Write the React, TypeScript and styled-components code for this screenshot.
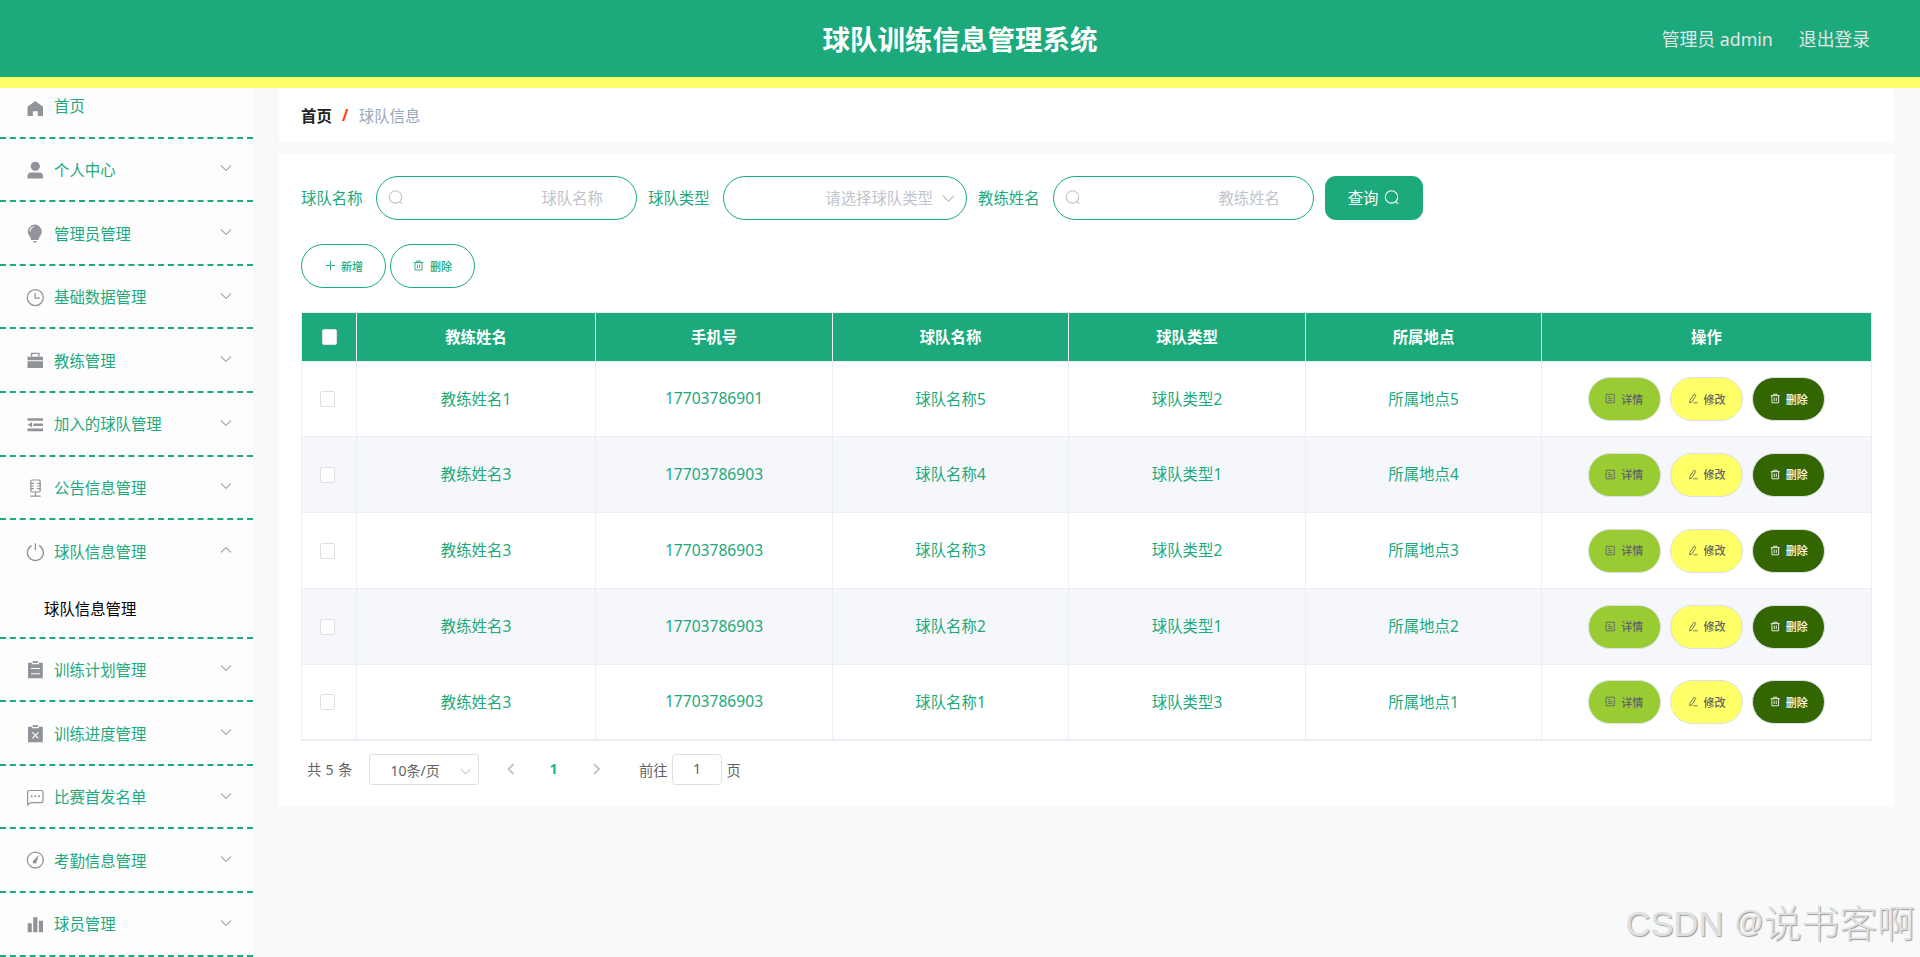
import React from 'react';
import styled, { createGlobalStyle, css } from 'styled-components';

const green = '#1ca97c';
const line = '#ebeef5';

const GlobalStyle = createGlobalStyle`
  * { box-sizing: border-box; }
  body {
    margin: 0;
    background: #f7f9fb;
    font-family: 'Noto Sans', 'Noto Sans CJK SC', sans-serif;
    font-size: 15.4px;
    color: #606266;
    overflow: hidden;
  }
  button, input { font-family: inherit; margin: 0; }
`;

const Page = styled.div`
  height: 957px;
  display: flex;
  flex-direction: column;
  overflow: hidden;
`;

const Header = styled.header`
  flex: none;
  height: 88px;
  display: grid;
  grid-template-columns: 1fr auto 1fr;
  align-items: center;
  padding: 0 50px 0 50px;
  background: ${green};
  border-bottom: 11px solid #ffff66;
`;

const Title = styled.h1`
  grid-column: 2;
  margin: 0;
  padding-top: 2px;
  font-size: 27.5px;
  line-height: 40px;
  font-weight: 700;
  color: #fff;
`;

const UserNav = styled.div`
  display: flex;
  justify-content: flex-end;
  gap: 26px;
  font-size: 17.8px;
  line-height: 26px;
  color: #e6e6e6;
`;

const Body = styled.div`
  flex: 1;
  min-height: 0;
  display: flex;
`;

const Sidebar = styled.nav`
  flex: none;
  width: 253px;
  background: #fdfdfd;
  overflow: hidden;
`;

const Menu = styled.ul`
  list-style: none;
  margin: -13px 0 0;
  padding: 0;
`;

const MenuItem = styled.li`
  border-bottom: 2px dashed ${green};
`;

const MenuRow = styled.div`
  height: 61.6px;
  padding: 2px 19px 0 26px;
  display: flex;
  align-items: center;
  color: ${green};
  svg { flex: none; overflow: visible; }
`;

const MenuLabel = styled.span`
  flex: 1;
  margin-left: 10px;
  padding-top: 1.4px;
  line-height: 22px;
`;

const MenuArrow = styled.svg`
  margin-top: -4px;
`;

const SubItem = styled.div`
  height: 54.8px;
  padding: 2px 0 4px 44px;
  display: flex;
  align-items: center;
  color: #000;
`;

const Main = styled.main`
  flex: 1;
  min-width: 0;
  padding: 0 26px;
`;

const Crumbs = styled.div`
  height: 55px;
  margin-bottom: 11px;
  padding: 0 22px 1px;
  display: flex;
  align-items: center;
  background: #fff;
  border-radius: 4px;
  color: #97a8be;
`;

const CrumbHome = styled.span`
  color: #222;
  font-weight: 600;
`;

const CrumbSlash = styled.span`
  width: 27px;
  text-align: center;
  font-weight: 700;
  color: #ff3a0c;
`;

const Card = styled.section`
  height: 653px;
  padding: 22px;
  background: #fff;
`;

const Form = styled.div`
  display: flex;
  align-items: center;
  height: 44px;
`;

const FieldLabel = styled.label<{ $gap?: number }>`
  margin-left: ${p => p.$gap ?? 0}px;
  width: 64px;
  padding-bottom: 1px;
  color: ${green};
`;

const Field = styled.div<{ $width: number; $ml: number; $pr: number }>`
  width: ${p => p.$width}px;
  height: 44px;
  margin-left: ${p => p.$ml}px;
  padding: 0 ${p => p.$pr}px 0 11px;
  display: flex;
  align-items: center;
  gap: 8px;
  border: 1px solid ${green};
  border-radius: 22px;
  color: #c0c4cc;
`;

const Placeholder = styled.span`
  margin-left: auto;
  padding-bottom: 1px;
`;

const SearchButton = styled.button`
  width: 98px;
  height: 44px;
  margin-left: 11px;
  padding: 0 1px 1px 0;
  display: flex;
  align-items: center;
  justify-content: center;
  gap: 5.5px;
  border: 0;
  border-radius: 11px;
  background: ${green};
  color: #fff;
  font-size: 15.4px;
`;

const Tools = styled.div`
  display: flex;
  gap: 3.8px;
  margin: 24px 0;
`;

const pill = css`
  height: 44px;
  display: flex;
  align-items: center;
  gap: 5.5px;
  border-radius: 22px;
  font-size: 11px;
  font-weight: 500;
  white-space: nowrap;
`;

const ToolButton = styled.button`
  ${pill}
  width: 85.2px;
  padding: 0 22px 1px 22.5px;
  border: 1px solid ${green};
  background: #fff;
  color: ${green};
`;

const ActionButton = styled.button<{ $bg: string; $fg: string }>`
  ${pill}
  width: 73px;
  padding: 0 16.5px 1px;
  border: 1px solid #dcdfe6;
  background: ${p => p.$bg};
  color: ${p => p.$fg};
`;

const Table = styled.div`
  width: 1571px;
  border: 1px solid ${line};
`;

const Row = styled.div<{ $height: number; $striped?: boolean; $head?: boolean }>`
  display: grid;
  grid-template-columns: 55px 239px 237px 236px 237px 236px 329px;
  height: ${p => p.$height}px;
  background: ${p => (p.$head ? green : p.$striped ? '#f5f7fa' : '#fff')};
  color: ${p => (p.$head ? '#fff' : green)};
  font-weight: ${p => (p.$head ? 700 : 400)};
`;

const Cell = styled.div`
  display: flex;
  align-items: center;
  justify-content: center;
  border-right: 1px solid ${line};
  border-bottom: 1px solid ${line};
  &:last-child { border-right: 0; }
`;

const TextCell = styled(Cell)`
  padding-bottom: 1.5px;
`;

const PhoneCell = styled(TextCell)`
  font-size: 15.6px;
`;

const CheckCell = styled(Cell)<{ $shift: number }>`
  justify-content: flex-start;
  padding-left: ${p => p.$shift}px;
`;

const CheckBox = styled.span`
  width: 15px;
  height: 16px;
  border: 1px solid #dcdfe6;
  border-radius: 2px;
  background: #fff;
`;

const Actions = styled(Cell)`
  gap: 9.2px;
`;

const Pager = styled.div`
  display: flex;
  align-items: center;
  height: 31px;
  margin-top: 13px;
  padding-left: 5px;
  font-size: 14.3px;
`;

const Total = styled.span`
  width: 63px;
  padding: 0 0 3px 1px;
  word-spacing: 0.6px;
`;

const SizeSelect = styled.div`
  width: 110px;
  height: 31px;
  padding: 0 6px 0 20.5px;
  display: flex;
  align-items: center;
  justify-content: space-between;
  border: 1px solid #dcdfe6;
  border-radius: 3px;
  font-size: 14px;
`;

const SelectArrow = styled.span`
  display: flex;
  padding-top: 3px;
`;

const PagerButton = styled.span<{ $width: number }>`
  width: ${p => p.$width}px;
  display: flex;
  justify-content: center;
  padding-bottom: 2px;
`;

const CurrentPage = styled(PagerButton)`
  color: #18b98a;
  font-weight: 700;
`;

const Jump = styled.span`
  display: flex;
  align-items: center;
  gap: 4.5px;
  margin-left: 11px;
`;

const JumpBox = styled.span`
  width: 50px;
  height: 31px;
  display: flex;
  align-items: center;
  justify-content: center;
  padding-bottom: 2px;
  border: 1px solid #dcdfe6;
  border-radius: 4px;
`;

const Watermark = styled.div`
  position: absolute;
  right: 5px;
  top: 896px;
  display: flex;
  font-family: 'Liberation Sans', 'Noto Sans CJK SC', sans-serif;
  font-size: 37.8px;
  font-weight: 300;
  line-height: 56px;
  color: #dfe1e1;
  text-shadow: 1px 1px 1px #97999b;
  white-space: nowrap;
`;

const Latin = styled.span`
  margin-right: 11px;
  font-size: 34.5px;
`;

const AtSign = styled.span`
  margin-top: -2px;
  font-size: 29px;
`;

const grey = '#909399';

const icons: Record<string, React.ReactNode> = {
  home: <path d="M9.3 3 17 8.7V18h-5.2v-4.8H6.9V18H1.5V8.7z" fill={grey} />,
  user: (
    <g fill={grey}>
      <circle cx="9.3" cy="5.3" r="4.6" />
      <path d="M1.5 17.4v-2.2c0-2.2 1.4-3.7 3.6-3.7h8.3c2.2 0 3.6 1.5 3.6 3.7v2.2z" />
    </g>
  ),
  bulb: (
    <g>
      <path d="M8.8-.4a7 7 0 0 1 7 7c0 3.4-2.6 4.8-3.3 8.3H5.2C4.5 11.4 1.8 10 1.8 6.6a7 7 0 0 1 7-7z" fill={grey} />
      <path d="M7 16.8h3.8" stroke={grey} strokeWidth="1.2" />
      <path d="M4 6.6C4 4 5.6 2 8.2 1.8" fill="none" stroke="#fdfdfd" strokeWidth="1.1" />
    </g>
  ),
  clock: (
    <g fill="none" stroke={grey} strokeWidth="1.25">
      <circle cx="9.3" cy="8.6" r="8" />
      <path d="M9.1 3.9v5.1h4.8" />
    </g>
  ),
  briefcase: (
    <g fill={grey}>
      <path d="M5 4.8V.8h8.6v4h-1.3V2.1H6.3v2.7z" />
      <path d="M1.5 4.8H17v3.5H1.5zM1.5 9.3H17v6.6H1.5z" />
    </g>
  ),
  fold: (
    <path d="M1.5 2.2H17v2.6H1.5zM7.3 7.4H17V10H7.3zM1.5 12.6H17v2.6H1.5zM1.7 8.7L6 6.1v5.2z" fill={grey} />
  ),
  mic: (
    <g fill="none" stroke={grey} strokeWidth="1.2">
      <rect x="4.8" y="1" width="9.4" height="12" rx="1.5" />
      <path d="M4.8 4.3h3M4.8 7h3M4.8 9.7h3M11.2 4.3h3M11.2 7h3M11.2 9.7h3M9.5 13v4M4.3 17.2h10.4" />
    </g>
  ),
  power: (
    <path d="M5.6 2.6a8 8 0 1 0 7.6 0M9.4.3v7" fill="none" stroke={grey} strokeWidth="1.25" />
  ),
  plan: (
    <g>
      <path d="M2 1.8h3.8v1.5H13V1.8h3.8v15.5H2zM6.5.2h5.7v1.9H6.5z" fill={grey} />
      <path d="M5 7.5h9M5 12.8h9" stroke="#fdfdfd" strokeWidth="1.1" />
    </g>
  ),
  failed: (
    <g>
      <path d="M2 1.8h3.8v1.5H13V1.8h3.8v15.5H2zM6.5.2h5.7v1.9H6.5z" fill={grey} />
      <path d="M6.4 7.3l6 6M12.4 7.3l-6 6" stroke="#fdfdfd" strokeWidth="1.2" />
    </g>
  ),
  chat: (
    <g>
      <path d="M1.6 16V3.2q0-1.7 1.7-1.7h12q1.7 0 1.7 1.7v8.7q0 1.7-1.7 1.7H4.5z" fill="none" stroke={grey} strokeWidth="1.2" />
      <g fill={grey}>
        <circle cx="5.6" cy="7.3" r="1" />
        <circle cx="9.3" cy="7.3" r="1" />
        <circle cx="13" cy="7.3" r="1" />
      </g>
    </g>
  ),
  gauge: (
    <g>
      <circle cx="9.3" cy="8" r="8" fill="none" stroke={grey} strokeWidth="1.25" />
      <path d="M12.9 2.9l-2.4 7.3a1.9 1.9 0 1 1-2.9-2z" fill={grey} />
    </g>
  ),
  bars: <path d="M1.7 7.2h4.1v9H1.7zM7.2 1.2h4.2v15H7.2zM12.9 4.7H17v11.5h-4.1z" fill={grey} />,
};

const MenuIcon = ({ name }: { name: string }) => (
  <svg width="18" height="18" viewBox="0 0 18 18">{icons[name]}</svg>
);

const SearchIcon = () => (
  <svg width="15.4" height="15.4" viewBox="0 0 15.4 15.4" fill="none" stroke="currentColor" strokeWidth="1.1">
    <circle cx="7.5" cy="6.9" r="6.2" />
    <path d="M11.4 11.3l2.8 2.6" />
  </svg>
);

const DownIcon = ({ size = 15 }: { size?: number }) => (
  <svg width={size} height={size} viewBox="0 0 15 15" fill="none" stroke="#c0c4cc" strokeWidth="1.2">
    <path d="M2 4.8l5.5 5.4L13 4.8" />
  </svg>
);

const smallPaths: Record<string, React.ReactNode> = {
  plus: <path d="M5.5.8v9.4M.8 5.5h9.4" />,
  trash: <path d="M.8 2.5h9.4M3.8 2.3V1h3.4v1.3M2 2.5V10h7V2.5M4.4 4.5v3.7M6.6 4.5v3.7" />,
  doc: <path d="M1.2 1h8.6v9H1.2zM3.3 3.5h2.2M3.3 5.5h4.4M3.3 7.5h4.4" />,
  edit: <path d="M6.3 1l2 1.2-4.2 6.7-2.3 1.2.2-2.6zM5.5 10h4.6" />,
};

const SmallIcon = ({ name }: { name: string }) => (
  <svg width="11" height="11" viewBox="0 0 11 11" fill="none" stroke="currentColor" strokeWidth="0.9">
    {smallPaths[name]}
  </svg>
);

const menu = [
  { icon: 'home', label: '首页', leaf: true },
  { icon: 'user', label: '个人中心' },
  { icon: 'bulb', label: '管理员管理' },
  { icon: 'clock', label: '基础数据管理' },
  { icon: 'briefcase', label: '教练管理' },
  { icon: 'fold', label: '加入的球队管理' },
  { icon: 'mic', label: '公告信息管理' },
  { icon: 'power', label: '球队信息管理', child: '球队信息管理' },
  { icon: 'plan', label: '训练计划管理' },
  { icon: 'failed', label: '训练进度管理' },
  { icon: 'chat', label: '比赛首发名单' },
  { icon: 'gauge', label: '考勤信息管理' },
  { icon: 'bars', label: '球员管理' },
];

const columns = ['教练姓名', '手机号', '球队名称', '球队类型', '所属地点', '操作'];

const teams = [
  { height: 75, coach: '教练姓名1', phone: '17703786901', rest: ['球队名称5', '球队类型2', '所属地点5'] },
  { height: 76, coach: '教练姓名3', phone: '17703786903', rest: ['球队名称4', '球队类型1', '所属地点4'] },
  { height: 76, coach: '教练姓名3', phone: '17703786903', rest: ['球队名称3', '球队类型2', '所属地点3'] },
  { height: 76, coach: '教练姓名3', phone: '17703786903', rest: ['球队名称2', '球队类型1', '所属地点2'] },
  { height: 75, coach: '教练姓名3', phone: '17703786903', rest: ['球队名称1', '球队类型3', '所属地点1'] },
];

export default function App() {
  return (
    <>
      <GlobalStyle />
      <Page>
        <Header>
          <Title>球队训练信息管理系统</Title>
          <UserNav>
            <span>管理员 admin</span>
            <span>退出登录</span>
          </UserNav>
        </Header>
        <Body>
          <Sidebar>
            <Menu>
              {menu.map(item => (
                <MenuItem key={item.label}>
                  <MenuRow>
                    <MenuIcon name={item.icon} />
                    <MenuLabel>{item.label}</MenuLabel>
                    {!item.leaf && (
                      <MenuArrow width="16" height="16" viewBox="0 0 16 16" fill="none" stroke="#a9acb1" strokeWidth="1.1">
                        <path d={item.child ? 'M3 10.5l5-5 5 5' : 'M3 5.5l5 5 5-5'} />
                      </MenuArrow>
                    )}
                  </MenuRow>
                  {item.child && <SubItem>{item.child}</SubItem>}
                </MenuItem>
              ))}
            </Menu>
          </Sidebar>
          <Main>
            <Crumbs>
              <CrumbHome>首页</CrumbHome>
              <CrumbSlash>/</CrumbSlash>
              <span>球队信息</span>
            </Crumbs>
            <Card>
              <Form>
                <FieldLabel>球队名称</FieldLabel>
                <Field $width={261} $ml={11} $pr={33}>
                  <SearchIcon />
                  <Placeholder>球队名称</Placeholder>
                </Field>
                <FieldLabel $gap={11}>球队类型</FieldLabel>
                <Field $width={244} $ml={11} $pr={10}>
                  <Placeholder>请选择球队类型</Placeholder>
                  <DownIcon />
                </Field>
                <FieldLabel $gap={11}>教练姓名</FieldLabel>
                <Field $width={261} $ml={11} $pr={33}>
                  <SearchIcon />
                  <Placeholder>教练姓名</Placeholder>
                </Field>
                <SearchButton>
                  <span>查询</span>
                  <SearchIcon />
                </SearchButton>
              </Form>
              <Tools>
                <ToolButton><SmallIcon name="plus" />新增</ToolButton>
                <ToolButton><SmallIcon name="trash" />删除</ToolButton>
              </Tools>
              <Table>
                <Row $height={49} $head>
                  <CheckCell $shift={20}><CheckBox /></CheckCell>
                  {columns.map(c => <TextCell key={c}>{c}</TextCell>)}
                </Row>
                {teams.map((team, i) => (
                  <Row key={i} $height={team.height} $striped={i % 2 === 1}>
                    <CheckCell $shift={18}><CheckBox /></CheckCell>
                    <TextCell>{team.coach}</TextCell>
                    <PhoneCell>{team.phone}</PhoneCell>
                    {team.rest.map((text, j) => <TextCell key={j}>{text}</TextCell>)}
                    <Actions>
                      <ActionButton $bg="#99cc33" $fg="#606266"><SmallIcon name="doc" />详情</ActionButton>
                      <ActionButton $bg="#ffff66" $fg="#606266"><SmallIcon name="edit" />修改</ActionButton>
                      <ActionButton $bg="#336600" $fg="#ffffff"><SmallIcon name="trash" />删除</ActionButton>
                    </Actions>
                  </Row>
                ))}
              </Table>
              <Pager>
                <Total>共 5 条</Total>
                <SizeSelect>
                  <span>10条/页</span>
                  <SelectArrow><DownIcon size={13} /></SelectArrow>
                </SizeSelect>
                <PagerButton $width={64}>
                  <svg width="14" height="14" viewBox="0 0 14 14" fill="none" stroke="#c0c4cc" strokeWidth="1.8"><path d="M9.5 2l-5 5 5 5" /></svg>
                </PagerButton>
                <CurrentPage $width={21}>1</CurrentPage>
                <PagerButton $width={64}>
                  <svg width="14" height="14" viewBox="0 0 14 14" fill="none" stroke="#c0c4cc" strokeWidth="1.8"><path d="M5 2l5 5-5 5" /></svg>
                </PagerButton>
                <Jump>
                  前往<JumpBox>1</JumpBox>页
                </Jump>
              </Pager>
            </Card>
          </Main>
        </Body>
      </Page>
      <Watermark>
        <Latin>CSDN</Latin>
        <AtSign>@</AtSign>
        <span>说书客啊</span>
      </Watermark>
    </>
  );
}
